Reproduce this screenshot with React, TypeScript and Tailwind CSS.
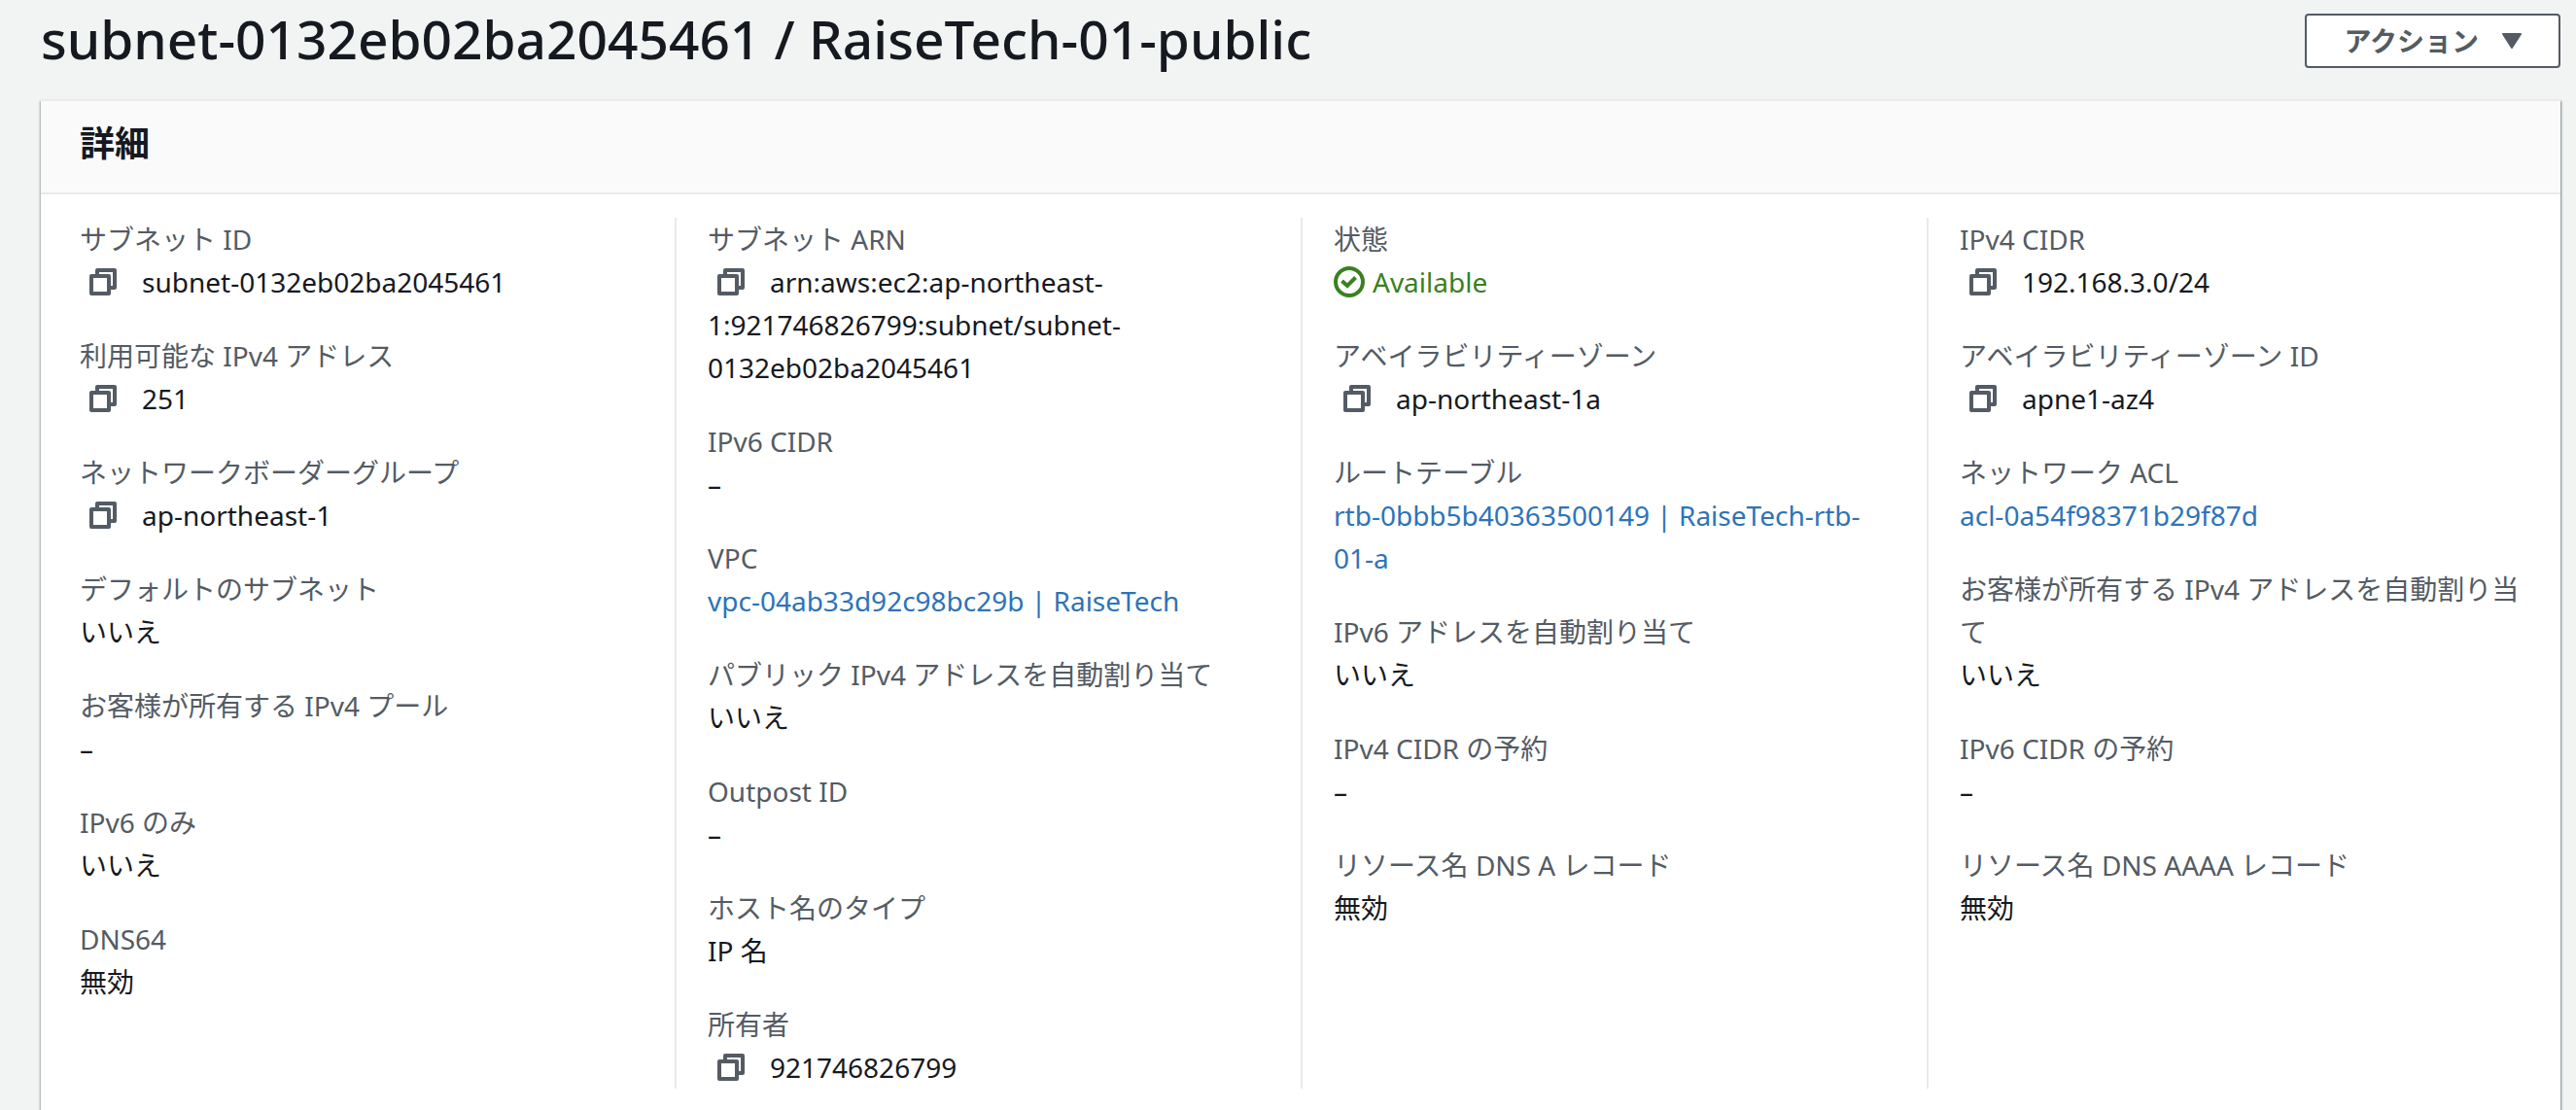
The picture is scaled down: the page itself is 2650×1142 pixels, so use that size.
import type { ReactNode } from "react";

type Kind = "text" | "copy" | "link" | "status";
type Field = { label: string; value: string; kind?: Kind };

const columns: Field[][] = [
  [
    { label: "サブネット ID", value: "subnet-0132eb02ba2045461", kind: "copy" },
    { label: "利用可能な IPv4 アドレス", value: "251", kind: "copy" },
    { label: "ネットワークボーダーグループ", value: "ap-northeast-1", kind: "copy" },
    { label: "デフォルトのサブネット", value: "いいえ" },
    { label: "お客様が所有する IPv4 プール", value: "–" },
    { label: "IPv6 のみ", value: "いいえ" },
    { label: "DNS64", value: "無効" },
  ],
  [
    {
      label: "サブネット ARN",
      value: "arn:aws:ec2:ap-northeast-1:921746826799:subnet/subnet-0132eb02ba2045461",
      kind: "copy",
    },
    { label: "IPv6 CIDR", value: "–" },
    { label: "VPC", value: "vpc-04ab33d92c98bc29b | RaiseTech", kind: "link" },
    { label: "パブリック IPv4 アドレスを自動割り当て", value: "いいえ" },
    { label: "Outpost ID", value: "–" },
    { label: "ホスト名のタイプ", value: "IP 名" },
    { label: "所有者", value: "921746826799", kind: "copy" },
  ],
  [
    { label: "状態", value: "Available", kind: "status" },
    { label: "アベイラビリティーゾーン", value: "ap-northeast-1a", kind: "copy" },
    { label: "ルートテーブル", value: "rtb-0bbb5b40363500149 | RaiseTech-rtb-01-a", kind: "link" },
    { label: "IPv6 アドレスを自動割り当て", value: "いいえ" },
    { label: "IPv4 CIDR の予約", value: "–" },
    { label: "リソース名 DNS A レコード", value: "無効" },
  ],
  [
    { label: "IPv4 CIDR", value: "192.168.3.0/24", kind: "copy" },
    { label: "アベイラビリティーゾーン ID", value: "apne1-az4", kind: "copy" },
    { label: "ネットワーク ACL", value: "acl-0a54f98371b29f87d", kind: "link" },
    { label: "お客様が所有する IPv4 アドレスを自動割り当て", value: "いいえ" },
    { label: "IPv6 CIDR の予約", value: "–" },
    { label: "リソース名 DNS AAAA レコード", value: "無効" },
  ],
];

function CopyButton({ label }: { label: string }) {
  return (
    <button type="button" aria-label={`${label} をコピー`} className="mr-[26px] ml-2.5 inline-flex h-[38px] items-center align-text-bottom text-[#545b64]">
      <svg viewBox="0 0 28 28" className="block size-7" fill="none" stroke="currentColor" strokeWidth="4" strokeLinejoin="round">
        <path d="M8 8V2H26V20H20" />
        <rect x="2" y="8" width="18" height="18" />
      </svg>
    </button>
  );
}

function StatusIcon() {
  return (
    <span className="mr-2 inline-flex h-[38px] items-center align-text-bottom">
      <svg viewBox="0 0 32 32" className="block size-8" fill="none" stroke="currentColor" strokeWidth="4" aria-hidden="true">
        <circle cx="16" cy="16" r="14" />
        <path d="M8.5 15L14 20L22.5 11.5" />
      </svg>
    </span>
  );
}

function Value({ field }: { field: Field }) {
  let body: ReactNode = field.value;
  if (field.kind === "copy") {
    body = (
      <>
        <CopyButton label={field.label} />
        {field.value}
      </>
    );
  } else if (field.kind === "link") {
    body = (
      <a href="#" className="text-[#2e73b8] hover:underline">
        {field.value}
      </a>
    );
  } else if (field.kind === "status") {
    body = (
      <span className="text-[#3a8020]">
        <StatusIcon />
        {field.value}
      </span>
    );
  }
  return <dd className="wrap-break-word text-[#16191f]">{body}</dd>;
}

export default function App() {
  return (
    <div lang="ja" className="min-h-screen bg-[#f2f4f3] pr-4 pl-[42px] font-['Noto_Sans','Noto_Sans_CJK_JP',sans-serif] text-[28px] leading-11 text-[#16191f]">
      <header className="flex items-start justify-between pt-3.5 pb-8">
        <h1 className="text-[55px] leading-13 font-medium">subnet-0132eb02ba2045461 / RaiseTech-01-public</h1>
        <button type="button" className="flex h-14 items-center gap-6 rounded-sm border-2 border-[#545b64] bg-white px-[38px] font-bold text-[#545b64]">
          アクション
          <svg viewBox="0 0 20 16" className="h-4 w-5" fill="currentColor" stroke="currentColor" strokeWidth="2" strokeLinejoin="round" aria-hidden="true">
            <path d="M1 1H19L10 15Z" />
          </svg>
        </button>
      </header>
      <section aria-labelledby="details" className="min-h-[1040px] border-t-2 border-[#ebebeb] bg-white shadow-[1px_2px_2px_rgba(0,28,36,0.5),-1px_2px_2px_rgba(0,28,36,0.3)]">
        <div className="border-b-2 border-[#eaeaea] bg-[#fafafa] px-10 pt-5 pb-[26px]">
          <h2 id="details" className="text-4xl leading-12 font-bold">詳細</h2>
        </div>
        <div className="grid grid-cols-4 px-2 pt-6 pb-10">
          {columns.map((fields, i) => (
            <dl key={i} className="flex flex-col gap-8 border-l-2 border-[#eaeaea] px-8 first:border-l-0">
              {fields.map((field) => (
                <div key={field.label}>
                  <dt className="text-[#545b64]">{field.label}</dt>
                  <Value field={field} />
                </div>
              ))}
            </dl>
          ))}
        </div>
      </section>
    </div>
  );
}
